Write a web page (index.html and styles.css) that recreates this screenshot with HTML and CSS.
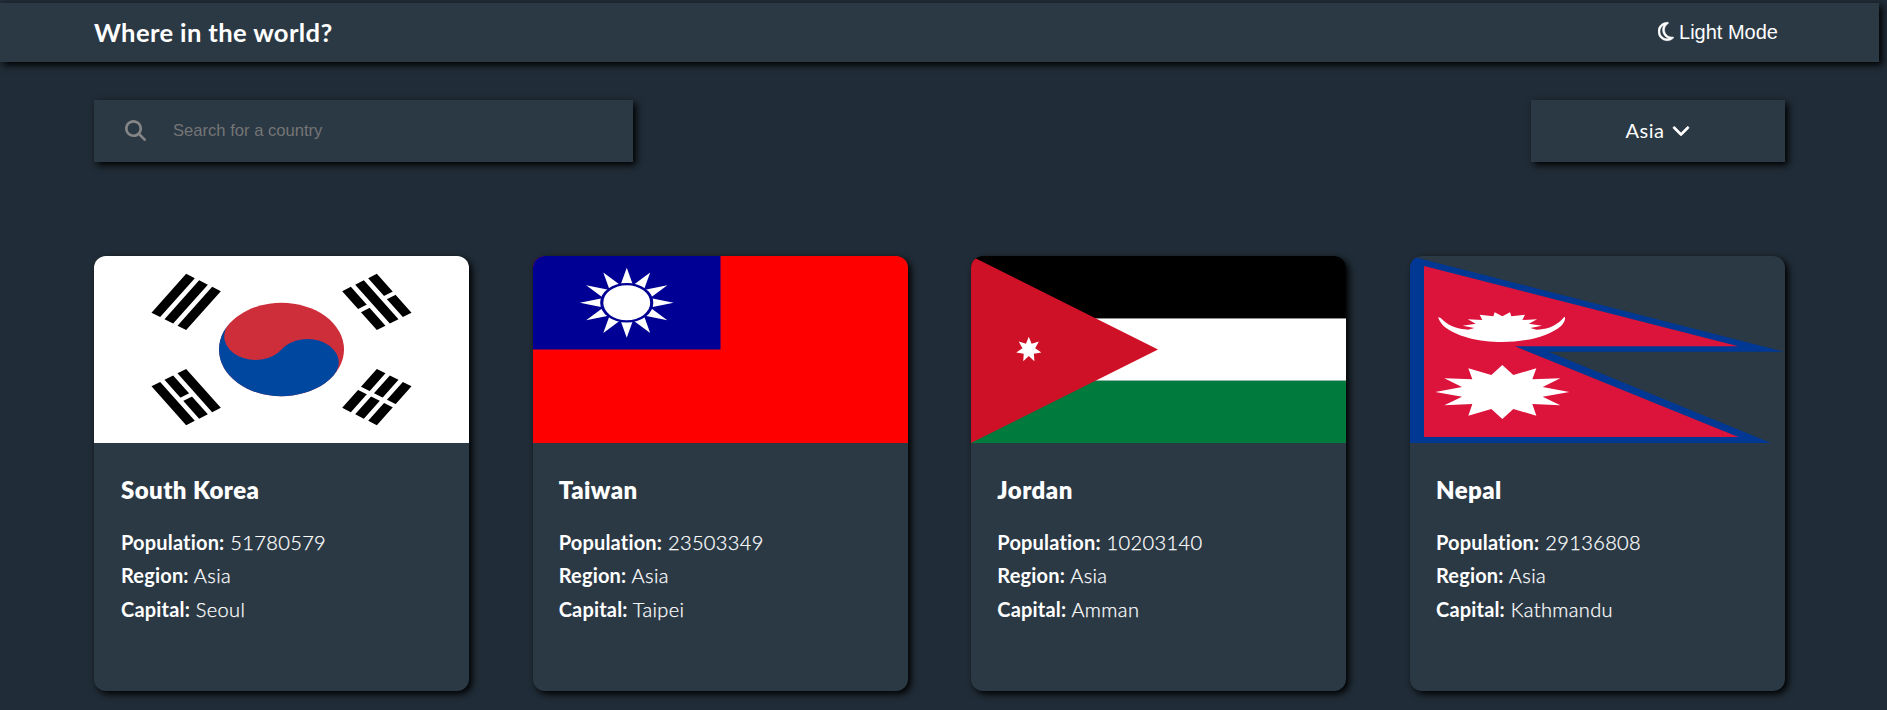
FILE: index.html
```html
<!DOCTYPE html>
<html lang="en">
<head>
<meta charset="utf-8">
<title>Where in the world?</title>
<link rel="stylesheet" href="styles.css">
</head>
<body>
<header class="header">
  <h1 class="title">Where in the world?</h1>
  <button class="mode" type="button">
    <svg class="moon" viewBox="0 0 384 512"><path fill-rule="evenodd" d="M144.7 98.7c-21 34.1-33.1 74.3-33.1 117.3c0 98 62.8 181.4 150.4 211.7c-12.4 2.8-25.3 4.3-38.6 4.3C126.6 432 48 353.3 48 256c0-68.9 39.4-128.4 96.8-157.3zM223.5 32C100 32 0 132.3 0 256S100 480 223.5 480c60.6 0 115.5-24.2 155.8-63.4c5-4.9 6.3-12.5 3.1-18.7s-10.1-9.7-17-8.5c-9.8 1.7-19.8 2.6-30.1 2.6c-96.9 0-175.5-78.8-175.5-176c0-65.8 36-123.1 89.3-153.3c6.1-3.5 9.2-10.5 7.7-17.3s-7.3-11.9-14.3-12.5c-6.3-.5-12.6-.8-19-.8z"/></svg>
    <span>Light Mode</span>
  </button>
</header>

<main class="page">
  <div class="filters">
    <label class="search">
      <svg class="search-icon" viewBox="0 0 512 512"><path d="M416 208c0 45.900-14.900 88.300-40 122.700L502.600 457.400c12.500 12.500 12.500 32.800 0 45.300s-32.800 12.500-45.300 0L330.700 376c-34.400 25.200-76.800 40-122.700 40C93.100 416 0 322.900 0 208S93.100 0 208 0S416 93.100 416 208zM208 352a144 144 0 1 0 0-288 144 144 0 1 0 0 288z"/></svg>
      <input class="search-input" type="text" placeholder="Search for a country">
    </label>
    <div class="region">
      <span>Asia</span>
      <svg class="chevron" viewBox="0 0 512 512"><path d="M233.400 406.600c12.500 12.500 32.800 12.500 45.300 0l192-192c12.500-12.500 12.500-32.800 0-45.300s-32.800-12.500-45.300 0L256 338.700 86.600 169.400c-12.500-12.500-32.800-12.500-45.300 0s-12.500 32.800 0 45.300l192 192z"/></svg>
    </div>
  </div>

  <section class="countries">
    <article class="card">
      <svg class="flag" viewBox="-36 -24 72 48" preserveAspectRatio="none">
        <path d="M-36-24h72v48h-72z" fill="#fff"/>
        <g transform="rotate(-56.3099325)">
          <g id="bars">
            <path id="trigram" d="M-6-25H6M-6-22H6M-6-19H6" stroke="#000" stroke-width="2"/>
            <use y="44" href="#trigram"/>
          </g>
          <path stroke="#fff" d="M0 17v10"/>
          <circle fill="#cd2e3a" r="12"/>
          <path fill="#0047a0" d="M0-12A6 6 0 0 0 0 0A6 6 0 0 1 0 12A12 12 0 0 1 0-12Z"/>
        </g>
        <g transform="rotate(-123.6900675)">
          <use href="#bars"/>
          <path stroke="#fff" d="M0-23.500v3M0 17v3.500M0 23.500v3"/>
        </g>
      </svg>
      <div class="info">
        <h2 class="name">South Korea</h2>
        <p class="fact"><b>Population:</b> 51780579</p>
        <p class="fact"><b>Region:</b> Asia</p>
        <p class="fact"><b>Capital:</b> Seoul</p>
      </div>
    </article>

    <article class="card">
      <svg class="flag" viewBox="0 0 900 600" preserveAspectRatio="none">
        <path fill="#f00" d="M0 0h900v600H0z"/>
        <path fill="#000095" d="M0 0h450v300H0z"/>
        <g transform="translate(225 150)" fill="#fff">
          <g id="rays">
            <path id="ray" d="M112.500 0L56-15.100V15.100z"/>
            <use href="#ray" transform="rotate(30)"/>
            <use href="#ray" transform="rotate(60)"/>
          </g>
          <use href="#rays" transform="rotate(90)"/>
          <use href="#rays" transform="rotate(180)"/>
          <use href="#rays" transform="rotate(270)"/>
          <circle r="60" stroke="#000095" stroke-width="7.500"/>
        </g>
      </svg>
      <div class="info">
        <h2 class="name">Taiwan</h2>
        <p class="fact"><b>Population:</b> 23503349</p>
        <p class="fact"><b>Region:</b> Asia</p>
        <p class="fact"><b>Capital:</b> Taipei</p>
      </div>
    </article>

    <article class="card">
      <svg class="flag" viewBox="0 0 375 187" preserveAspectRatio="none">
        <path d="M0 0h375v62.400H0z"/>
        <path fill="#fff" d="M0 62.400h375v62.400H0z"/>
        <path fill="#007a3d" d="M0 124.700h375V187H0z"/>
        <path fill="#ce1126" d="M0 0l187 93.500L0 187z"/>
        <path fill="#fff" transform="translate(57.800 93.600)" d="M0-12.900L2.820-5.860L10.090-8.040L6.340-1.450L12.580 2.870L5.080 4.050L5.600 11.620L0 6.500L-5.600 11.620L-5.080 4.050L-12.580 2.870L-6.340-1.450L-10.090-8.040L-2.820-5.860z"/>
      </svg>
      <div class="info">
        <h2 class="name">Jordan</h2>
        <p class="fact"><b>Population:</b> 10203140</p>
        <p class="fact"><b>Region:</b> Asia</p>
        <p class="fact"><b>Capital:</b> Amman</p>
      </div>
    </article>

    <article class="card">
      <svg class="flag" viewBox="30 48 1125 561" preserveAspectRatio="none">
        <path fill="#003893" d="M30 48L1152 335H445L1113 609H30z"/>
        <path fill="#dc143c" d="M72 78L1015 319H345L1015 591H72z"/>
        <path fill="#fff" d="M115 231C120 233 124 234 126 238C150 262 180 268 204 269L223 264L188 257L227 251L203 238L247 240L239 224L280 229L284 217L307 229L330 217L334 229L375 224L367 240L411 238L387 251L426 257L391 264L410 269C434 268 464 262 488 236C490 233 493 231 495 231C496 240 492 248 484 257C410 322 204 322 130 257C122 248 116 240 115 231z"/>
        <path fill="#fff" d="M307 375L340 405L409 385L397 418L481 415L428 441L508 456L428 470L481 496L397 492L409 527L340 507L307 537L274 507L205 527L217 492L133 496L186 470L106 456L186 441L133 415L217 418L205 385L274 405z"/>
      </svg>
      <div class="info">
        <h2 class="name">Nepal</h2>
        <p class="fact"><b>Population:</b> 29136808</p>
        <p class="fact"><b>Region:</b> Asia</p>
        <p class="fact"><b>Capital:</b> Kathmandu</p>
      </div>
    </article>
  </section>
</main>
</body>
</html>
```
FILE: styles.css
```css
* { box-sizing: border-box; }

body {
  margin: 0;
  height: 710px;
  padding: 3px 8px 0 0;
  overflow: hidden;
  background: #202c37;
  color: #fff;
  font-family: Lato, sans-serif;
}

.header,
.search,
.region,
.card {
  background: #2b3945;
  box-shadow: 3px 3px 7px #000;
}

.header {
  display: flex;
  align-items: center;
  justify-content: space-between;
  height: 59px;
  padding: 0 101px 2px 94px;
}

.title {
  margin: 0;
  font-size: 25.6px;
  font-weight: 700;
  line-height: 36px;
  letter-spacing: 0.37px;
}

.mode {
  display: flex;
  align-items: center;
  gap: 5px;
  padding: 0;
  border: 0;
  background: none;
  color: #fff;
  font: 20px/24px "Liberation Sans", Arial, sans-serif;
}

.moon {
  width: 15.750px;
  height: 21px;
  fill: #fff;
  stroke: #fff;
  stroke-width: 12px;
}

.page { padding: 38px 94px 0; }

.filters {
  display: flex;
  justify-content: space-between;
}

.search {
  display: flex;
  align-items: center;
  gap: 27px;
  width: 539px;
  height: 62px;
  padding: 0 0 1px 31px;
}

.search-icon { width: 21px; height: 21px; fill: #858585; }

.search-input {
  width: 400px;
  padding: 0;
  border: 0;
  background: none;
  font: 16.6px/24px "Liberation Sans", Arial, sans-serif;
}

.search-input::placeholder { color: #757575; }

.region {
  display: flex;
  align-items: center;
  justify-content: center;
  gap: 8px;
  width: 254px;
  height: 62px;
  padding-bottom: 2px;
  font-size: 20px;
  letter-spacing: 0.5px;
}

.chevron {
  width: 18px;
  height: 18px;
  fill: #fff;
  stroke: #fff;
  stroke-width: 22px;
}

.countries {
  display: flex;
  justify-content: space-between;
  margin-top: 94px;
}

.card {
  width: 375px;
  height: 435px;
  border-radius: 12px;
  overflow: hidden;
}

.flag {
  display: block;
  width: 375px;
  height: 187px;
}

.info { padding: 30px 26px 0; }

.card:first-child .info { padding-left: 27px; }

.name {
  margin: 0 0 19.5px;
  font-size: 24px;
  font-weight: 800;
  line-height: 33px;
  letter-spacing: 0.43px;
}

.fact {
  margin: 0;
  font-size: 20px;
  font-weight: 300;
  line-height: 33.5px;
  letter-spacing: 0.38px;
  -webkit-text-stroke: 0.25px #fff;
}

.fact b {
  font-weight: 700;
  letter-spacing: 0.18px;
  -webkit-text-stroke: 0;
}
```
